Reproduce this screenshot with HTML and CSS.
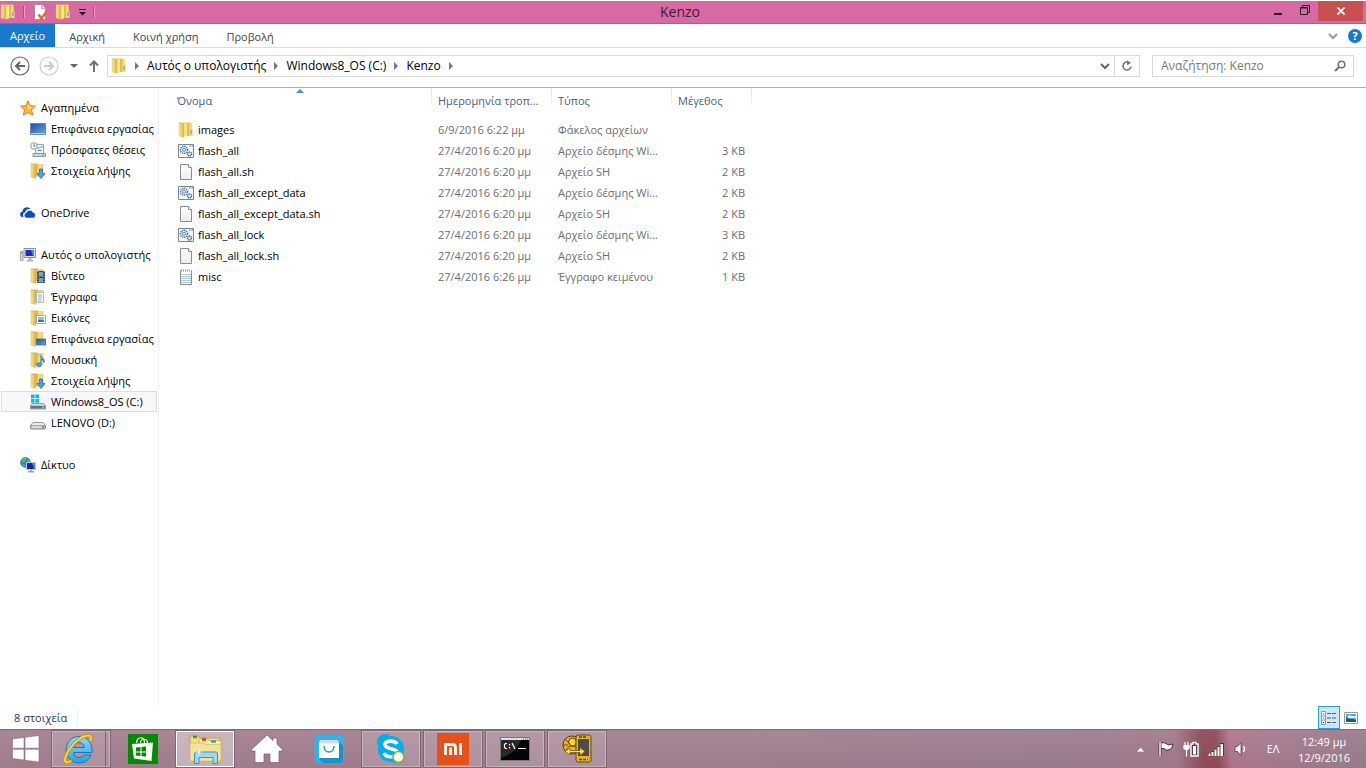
FILE: index.html
```html
<!DOCTYPE html>
<html lang="el">
<head>
    <meta charset="UTF-8">
    <title>Kenzo</title>
    <link rel="stylesheet" href="styles.css">
</head>
<body>
    <!-- shared icons -->
    <svg class="sprite" aria-hidden="true">
        <defs>
            <linearGradient id="gFolder" x1="0" x2="1" y1="0" y2="0">
                <stop offset="0" stop-color="#fbe99a"/>
                <stop offset="1" stop-color="#dcb23c"/>
            </linearGradient>
            <linearGradient id="gBlue" x1="0" x2="1" y1="0" y2="1">
                <stop offset="0" stop-color="#1d4fa0"/>
                <stop offset="1" stop-color="#6fa5e2"/>
            </linearGradient>
            <linearGradient id="gPage" x1="0" x2="0" y1="0" y2="1">
                <stop offset="0" stop-color="#fff"/>
                <stop offset="1" stop-color="#ececec"/>
            </linearGradient>
            <linearGradient id="gIe" x1="0" x2="0" y1="0" y2="1">
                <stop offset="0" stop-color="#8adcfb"/>
                <stop offset="1" stop-color="#2a9fe0"/>
            </linearGradient>
        </defs>
        <symbol id="folder" viewBox="0 0 16 16">
            <path d="M1 .5h11.500q1 0 1 1v5l1 1V14H1z" fill="#e9ca5e"/>
            <path d="M10.500 1h3v6l.8.800V14h-4z" fill="#f0d873"/>
            <path d="M1 .800 5.800 2v13.500L1 14z" fill="url(#gFolder)" stroke="#d9b84d" stroke-width=".4"/>
            <path d="M6.300 1.800 9.500 1v13l-3.200 1.500z" fill="#f8e690"/>
            <path d="M9.500 1l1 .5V14l-1 .3z" fill="#cfa636"/>
            <path d="M13 8v4" stroke="#4e9bd8"/>
        </symbol>
        <symbol id="lib" viewBox="0 0 16 16">
            <path d="M1 .5h7v13H3z" fill="#dcb850"/>
            <path d="M7.500 1.500H13V13H7z" fill="#f0d889" stroke="#d5b154" stroke-width=".5"/>
            <path d="M1 .8 5.500 2v13.500L1 14z" fill="url(#gFolder)" stroke="#d5b154" stroke-width=".5"/>
        </symbol>
        <symbol id="star" viewBox="0 0 16 16">
            <path d="m8 .8 2.200 4.900 5.300.5-4 3.600 1.200 5.300L8 12.400l-4.700 2.700 1.200-5.300-4-3.600 5.300-.5z" fill="#fdb948" stroke="#e8761f"/>
            <path d="m8 3 1.400 3.500 3.600.5L8 9z" fill="#ffe39a"/>
        </symbol>
        <symbol id="desktop" viewBox="0 0 16 16">
            <path d="M.5 2.500h15v11H.5z" fill="url(#gBlue)" stroke="#6f86a8"/>
            <path d="M1 12.500h14" stroke="#c5d3e4"/>
        </symbol>
        <symbol id="recent" viewBox="0 0 16 16">
            <path d="M5.500 2.500h8v9h-8z" fill="#eef2f5" stroke="#9aa5ae"/>
            <path d="M3 11.500h12.500v3H3z" fill="#cfd5da" stroke="#8f989f"/>
            <path d="M7.500 6h2M10.500 5h2M7.500 8.500h4" stroke="#3e86c5"/>
            <circle cx="4" cy="4" r="3.300" fill="#fafafa" stroke="#8d969d"/>
            <path d="M4 2v2.200h1.500" fill="none" stroke="#555" stroke-width=".8"/>
            <path d="M12 13h2" stroke="#5cbf59"/>
        </symbol>
        <symbol id="downloads" viewBox="0 0 16 16">
            <use href="#lib"/>
            <path d="M9.500 6h3v4.500H15l-4 5-4-5h2.500z" fill="#43a6ea" stroke="#1d6fb8" stroke-width=".8"/>
        </symbol>
        <symbol id="onedrive" viewBox="0 0 16 16">
            <path d="M1.500 12A3 3 0 0 1 2.500 6.500 4.500 4.500 0 0 1 10.500 4c-3-.5-5 1-5.200 3.300C3 8 2.500 10 3.500 12z" fill="#0e4db3"/>
            <path d="M6.500 13a2.700 2.700 0 0 1-.3-5.300 3.700 3.700 0 0 1 6.800-.5 3 3 0 0 1 .5 5.800z" fill="#0e4db3" stroke="#fff" stroke-width=".6"/>
        </symbol>
        <symbol id="computer" viewBox="0 0 16 16">
            <path d="M.5 4.500h2.500v9H.5z" fill="#d5d9de" stroke="#8a9097" stroke-width=".7"/>
            <path d="M4 1.500h11.500v9H4z" fill="#dfe4ec" stroke="#8a93a1"/>
            <path d="M5.500 3H14v6H5.500z" fill="#1a2fc0"/>
            <path d="M11 3h3v6h-1z" fill="#607bf0"/>
            <path d="M8.500 11h3v2h2v1.500H6.500V13h2z" fill="#b1b7bf"/>
            <path d="M1 6h1.500" stroke="#3fae49"/>
        </symbol>
        <symbol id="video" viewBox="0 0 16 16">
            <use href="#lib"/>
            <path d="M7 3h8v12H7z" fill="#39454f"/>
            <path d="M9 4h4v4.500H9zM9 10h4v4.500H9z" fill="#69a7d8"/>
            <path d="M8 3v12M14 3v12" stroke="#dfe5e9" stroke-dasharray="1 1.500" stroke-width=".9"/>
        </symbol>
        <symbol id="docs" viewBox="0 0 16 16">
            <use href="#lib"/>
            <path d="M6.500 3.500h7v10h-7z" fill="#fff" stroke="#a2adb8" stroke-width=".8"/>
            <path d="M8 6h4M8 8h4M8 10h4M8 12h3" stroke="#5f9bd2" stroke-width=".8"/>
        </symbol>
        <symbol id="pics" viewBox="0 0 16 16">
            <use href="#lib"/>
            <path d="M6.500 5.500h9v8h-9z" fill="#fff" stroke="#8e9ba7" stroke-width=".8"/>
            <path d="M8 7h6v5H8z" fill="#8fc4ea"/>
            <path d="M8 10.500c2-2 4 .5 6-.5v2H8z" fill="#2e8070"/>
        </symbol>
        <symbol id="libdesk" viewBox="0 0 16 16">
            <use href="#lib"/>
            <path d="M6.500 8h9v6h-9z" fill="url(#gBlue)" stroke="#41628f" stroke-width=".8"/>
        </symbol>
        <symbol id="music" viewBox="0 0 16 16">
            <use href="#lib"/>
            <path d="M10 2.500c.5 3 5 3.500 4 8 0-2-1.500-3-3-3.500V12" fill="#43a6ea" stroke="#1d74c1" stroke-width=".9"/>
            <ellipse cx="9" cy="12.800" rx="2.500" ry="2" fill="#43a6ea" stroke="#1d74c1" stroke-width=".7"/>
        </symbol>
        <symbol id="osdrive" viewBox="0 0 16 16">
            <path d="m2 9.500-1.500 2v3.500h15v-3.500l-2-2z" fill="#d4dade" stroke="#6e7a82" stroke-width=".7"/>
            <path d="M1 11.800h14v2.700H1z" fill="#63737c"/>
            <path d="M12 13.200h2" stroke="#5ff04a" stroke-width="1.500"/>
            <path d="M1 .5h3.600v3.700H1zM5.400.5H9v3.700H5.400zM1 5h3.600v3.700H1zM5.400 5H9v3.700H5.400z" fill="#10b5ee"/>
        </symbol>
        <symbol id="drive" viewBox="0 0 16 16">
            <path d="m3 7.500-2.500 3V13q0 1 1 1h13q1 0 1-1v-2.500l-2.500-3z" fill="#ececec" stroke="#7d7d7d" stroke-width=".8"/>
            <path d="M.8 10.500h14.400V13q0 .8-1 .8H1.800q-1 0-1-.8z" fill="#d9d9d9" stroke="#777" stroke-width=".6"/>
            <path d="M12 12.200h2" stroke="#2e9e2d" stroke-width="1.600"/>
        </symbol>
        <symbol id="network" viewBox="0 0 16 16">
            <circle cx="5.500" cy="5.500" r="5" fill="#2e83d0" stroke="#2865a5" stroke-width=".5"/>
            <path d="M2 2.500c2-1.500 3-1.500 4.500-1.500L5 4 2.500 5.500zM1.500 6.500 4.500 8 4 10zM7.500 2l2.500 1.500V6L8 5z" fill="#58c94b"/>
            <path d="M6.500 5.500h9v7h-9z" fill="#14279a" stroke="#c3cad8"/>
            <path d="M12 6h3v6h-1z" fill="#5d7ae8"/>
            <path d="M10 13h2v1h2v1.500H8V14h2z" fill="#9aa3ae"/>
        </symbol>
        <symbol id="batch" viewBox="0 0 16 16">
            <path d="M.5 1.500h15v13H.5z" fill="#f5f9fc" stroke="#7e858c"/>
            <path d="M11 3h4" stroke="#4c6ea0" stroke-dasharray="1 .5"/>
            <circle cx="6" cy="6.800" r="3.600" fill="#dceaf5" stroke="#3f6b96" stroke-width="1.400" stroke-dasharray="1.200 .9"/>
            <circle cx="6" cy="6.800" r="1.500" fill="#fff" stroke="#3f6b96" stroke-width=".8"/>
            <circle cx="11.500" cy="11" r="2" fill="#dceaf5" stroke="#2f5c8a" stroke-width="1.400" stroke-dasharray="1 .6"/>
        </symbol>
        <symbol id="page" viewBox="0 0 16 16">
            <path d="M2.500.5h8l3 3v12h-11z" fill="url(#gPage)" stroke="#8c8c8c"/>
            <path d="M10.500.5v3h3" fill="#fff" stroke="#8c8c8c"/>
        </symbol>
        <symbol id="text" viewBox="0 0 16 16">
            <path d="M2.500 1.500h11v14h-11z" fill="#fafcfd" stroke="#8c8c8c"/>
            <path d="M3 5.500h10M3 7.500h10M3 9.500h10M3 11.500h10M3 13.500h10" stroke="#b3c8d8"/>
            <path d="M3 1.500h10" stroke="#fff" stroke-width="2"/>
            <path d="M3 1.500h10" stroke="#999" stroke-width="2" stroke-dasharray="1 1"/>
        </symbol>
        <symbol id="chev" viewBox="0 0 10 10">
            <path d="m1 3 4 4 4-4" fill="none" stroke="currentColor" stroke-width="2"/>
        </symbol>
        <symbol id="next" viewBox="0 0 6 8">
            <path d="M1 0 5 4 1 8z" fill="#777"/>
        </symbol>
    </svg>

    <div class="window">
        <header class="titlebar">
            <div class="quick-access">
                <svg class="icon"><use href="#folder"/></svg>
                <span class="qa-line"></span>
                <button class="qa-button" aria-label="Ιδιότητες">
                    <svg class="icon" viewBox="0 0 16 16">
                        <path d="M2.500.5h7l4 4v11h-11z" fill="#fdfdfd" stroke="#a58c9c"/>
                        <path d="M9.500.5v4h4" fill="#e8e4e8" stroke="#b7a8b2"/>
                        <path d="m6.500 10.500 3 4 5-7" fill="none" stroke="#e5672c" stroke-width="2.400"/>
                    </svg>
                </button>
                <button class="qa-button" aria-label="Νέος φάκελος"><svg class="icon"><use href="#folder"/></svg></button>
                <button class="qa-menu" aria-label="Προσαρμογή">
                    <svg width="7" height="7" viewBox="0 0 7 7"><path d="M0 .5h7" stroke="#201018"/><path d="M0 3h7L3.500 6.500z" fill="#201018"/></svg>
                </button>
                <span class="qa-line"></span>
            </div>
            <h1>Kenzo</h1>
            <div class="window-buttons">
                <button class="win-button" aria-label="Ελαχιστοποίηση"><svg width="10" height="12" viewBox="0 0 10 12"><path d="M1 9h8" stroke="#222" stroke-width="2"/></svg></button>
                <button class="win-button" aria-label="Επαναφορά"><svg width="12" height="12" viewBox="0 0 12 12"><path d="M3.500 2.500v-2h7v7H9M1.500 2.500h7v7h-7zM1 3h8" fill="none" stroke="#222"/></svg></button>
                <button class="win-button close" aria-label="Κλείσιμο"><svg width="8" height="8" viewBox="0 0 8 8"><path d="m.5.5 7 7m0-7-7 7" stroke="#fff" stroke-width="1.600"/></svg></button>
            </div>
        </header>

        <nav class="ribbon">
            <button class="tab file">Αρχείο</button>
            <button class="tab">Αρχική</button>
            <button class="tab">Κοινή χρήση</button>
            <button class="tab">Προβολή</button>
            <div class="ribbon-end">
                <button class="plain" aria-label="Ανάπτυξη κορδέλας"><svg class="chev light"><use href="#chev"/></svg></button>
                <button class="help" aria-label="Βοήθεια">?</button>
            </div>
        </nav>

        <div class="address-row">
            <div class="nav-buttons">
                <button class="plain" aria-label="Πίσω">
                    <svg width="20" height="20" viewBox="0 0 20 20" fill="none" stroke="#666"><circle cx="10" cy="10" r="9" stroke-width="1.200"/><path d="M15 10H6m4-4-4 4 4 4" stroke-width="2"/></svg>
                </button>
                <button class="plain" aria-label="Εμπρός">
                    <svg width="20" height="20" viewBox="0 0 20 20" fill="none" stroke="#ccc"><circle cx="10" cy="10" r="9" stroke-width="1.200"/><path d="M5 10h9m-4-4 4 4-4 4" stroke-width="2"/></svg>
                </button>
                <button class="history" aria-label="Ιστορικό"><svg width="8" height="4" viewBox="0 0 8 4"><path d="M0 0h8L4 4z" fill="#666"/></svg></button>
                <button class="plain" aria-label="Επάνω">
                    <svg width="10" height="12" viewBox="0 0 10 12" fill="none" stroke="#707070" stroke-width="2"><path d="M5 12V2M1 5.500l4-4 4 4"/></svg>
                </button>
            </div>
            <div class="address-box">
                <svg class="icon"><use href="#folder"/></svg>
                <svg class="next"><use href="#next"/></svg>
                <a href="#">Αυτός ο υπολογιστής</a>
                <svg class="next"><use href="#next"/></svg>
                <a href="#">Windows8_OS (C:)</a>
                <svg class="next"><use href="#next"/></svg>
                <a href="#">Kenzo</a>
                <svg class="next"><use href="#next"/></svg>
                <button class="plain drop" aria-label="Προηγούμενες θέσεις"><svg class="chev"><use href="#chev"/></svg></button>
                <button class="refresh" aria-label="Ανανέωση">
                    <svg width="12" height="12" viewBox="0 0 12 12"><path d="M8.500 2.800A4 4 0 1 0 10 6.500" fill="none" stroke="#777" stroke-width="1.600"/><path d="M6 .2v5L10 3z" fill="#777"/></svg>
                </button>
            </div>
            <form class="search-box">
                <input type="text" placeholder="Αναζήτηση: Kenzo" aria-label="Αναζήτηση">
                <button class="plain" type="button" aria-label="Αναζήτηση">
                    <svg width="12" height="12" viewBox="0 0 12 12" fill="none" stroke="#707070"><circle cx="7.500" cy="4.500" r="3.300" stroke-width="1.500"/><path d="M5 7 1 11" stroke-width="2"/></svg>
                </button>
            </form>
        </div>

        <div class="content">
            <nav class="sidebar">
                <ul>
                    <li><a href="#"><svg class="icon"><use href="#star"/></svg>Αγαπημένα</a></li>
                    <li class="child"><a href="#"><svg class="icon"><use href="#desktop"/></svg>Επιφάνεια εργασίας</a></li>
                    <li class="child"><a href="#"><svg class="icon"><use href="#recent"/></svg>Πρόσφατες θέσεις</a></li>
                    <li class="child"><a href="#"><svg class="icon"><use href="#downloads"/></svg>Στοιχεία λήψης</a></li>
                </ul>
                <ul>
                    <li><a href="#"><svg class="icon"><use href="#onedrive"/></svg>OneDrive</a></li>
                </ul>
                <ul>
                    <li><a href="#"><svg class="icon"><use href="#computer"/></svg>Αυτός ο υπολογιστής</a></li>
                    <li class="child"><a href="#"><svg class="icon"><use href="#video"/></svg>Βίντεο</a></li>
                    <li class="child"><a href="#"><svg class="icon"><use href="#docs"/></svg>Έγγραφα</a></li>
                    <li class="child"><a href="#"><svg class="icon"><use href="#pics"/></svg>Εικόνες</a></li>
                    <li class="child"><a href="#"><svg class="icon"><use href="#libdesk"/></svg>Επιφάνεια εργασίας</a></li>
                    <li class="child"><a href="#"><svg class="icon"><use href="#music"/></svg>Μουσική</a></li>
                    <li class="child"><a href="#"><svg class="icon"><use href="#downloads"/></svg>Στοιχεία λήψης</a></li>
                    <li class="child selected"><a href="#"><svg class="icon"><use href="#osdrive"/></svg>Windows8_OS (C:)</a></li>
                    <li class="child"><a href="#"><svg class="icon"><use href="#drive"/></svg>LENOVO (D:)</a></li>
                </ul>
                <ul>
                    <li><a href="#"><svg class="icon"><use href="#network"/></svg>Δίκτυο</a></li>
                </ul>
            </nav>

            <main class="files">
                <table>
                    <colgroup>
                        <col class="col-name"><col class="col-date"><col class="col-type"><col class="col-size">
                    </colgroup>
                    <thead>
                        <tr>
                            <th class="name">Όνομα<svg class="sort" viewBox="0 0 8 4"><path d="M4 0 8 4H0z" fill="#4c8fb8"/></svg></th>
                            <th>Ημερομηνία τροπ...</th>
                            <th>Τύπος</th>
                            <th>Μέγεθος</th>
                        </tr>
                    </thead>
                    <tbody>
                        <tr><td class="name"><svg class="icon"><use href="#folder"/></svg>images</td><td>6/9/2016 6:22 μμ</td><td>Φάκελος αρχείων</td><td class="size"></td></tr>
                        <tr><td class="name"><svg class="icon"><use href="#batch"/></svg>flash_all</td><td>27/4/2016 6:20 μμ</td><td>Αρχείο δέσμης Wi...</td><td class="size">3 KB</td></tr>
                        <tr><td class="name"><svg class="icon"><use href="#page"/></svg>flash_all.sh</td><td>27/4/2016 6:20 μμ</td><td>Αρχείο SH</td><td class="size">2 KB</td></tr>
                        <tr><td class="name"><svg class="icon"><use href="#batch"/></svg>flash_all_except_data</td><td>27/4/2016 6:20 μμ</td><td>Αρχείο δέσμης Wi...</td><td class="size">2 KB</td></tr>
                        <tr><td class="name"><svg class="icon"><use href="#page"/></svg>flash_all_except_data.sh</td><td>27/4/2016 6:20 μμ</td><td>Αρχείο SH</td><td class="size">2 KB</td></tr>
                        <tr><td class="name"><svg class="icon"><use href="#batch"/></svg>flash_all_lock</td><td>27/4/2016 6:20 μμ</td><td>Αρχείο δέσμης Wi...</td><td class="size">3 KB</td></tr>
                        <tr><td class="name"><svg class="icon"><use href="#page"/></svg>flash_all_lock.sh</td><td>27/4/2016 6:20 μμ</td><td>Αρχείο SH</td><td class="size">2 KB</td></tr>
                        <tr><td class="name"><svg class="icon"><use href="#text"/></svg>misc</td><td>27/4/2016 6:26 μμ</td><td>Έγγραφο κειμένου</td><td class="size">1 KB</td></tr>
                    </tbody>
                </table>
            </main>
        </div>

        <footer class="statusbar">
            <span class="count">8 στοιχεία</span>
            <div class="views">
                <button class="view active" aria-label="Λεπτομέρειες">
                    <svg width="16" height="14" viewBox="0 0 16 14"><path d="M.5.5h4v13h-4zM.5 5h4M.5 9h4" fill="#fff" stroke="#8d9aa5"/><path d="M2 3h1M2 11.500h1" stroke="#333"/><path d="M2 7h1" stroke="#d22"/><path d="M6 2.500h4m1 0h4M6 7h4m1 0h4M6 11.500h4m1 0h4" stroke="#4f5f70"/></svg>
                </button>
                <button class="view" aria-label="Μεγάλα εικονίδια">
                    <svg width="14" height="12" viewBox="0 0 14 12"><path d="M.5.500h13v11H.5z" fill="#fff" stroke="#8d9aa5"/><path d="M2 2h10v8H2z" fill="#5ca4dd"/><path d="M4 4c2-2 3 1 8 0v2L4 6z" fill="#e4f3fc"/><path d="M2 5c3 3 5 1 10 3v2H2z" fill="#1f5d4d"/></svg>
                </button>
            </div>
        </footer>
    </div>

    <footer class="taskbar">
        <button class="start" aria-label="Έναρξη">
            <svg width="28" height="28" viewBox="0 0 28 28"><path d="M.5 4 12 2.500v10.700H.5zM13 2.300 27 .5v12.700H13zM.5 14.300H12V25L.5 23.500zM13 14.300h14V27l-14-1.800z" fill="#fff" stroke="#7d606f" stroke-width=".5"/></svg>
        </button>
        <div class="apps">
            <button class="app open stacked" aria-label="Internet Explorer">
                <svg width="32" height="32" viewBox="0 0 32 32">
                    <path d="M16 3.500C8.500 3.500 3 9.500 3 17s5.500 13 13 13c6 0 10-3 12-8h-7c-1 1.800-2.700 2.600-5 2.600-3.200 0-5.200-2-5.500-5.100H29C30 10 24 3.500 16 3.500zM10.600 14.500C11 11.500 13 9.500 16 9.500s5 2 5.300 5z" fill="url(#gIe)" stroke="#1b76b5" fill-rule="evenodd"/>
                    <path d="M27 8c2-3.500 1-6-2.500-5.500C16 3.500 5 15 2.300 25c-1.300 5 2.200 5.500 6 2.500" fill="none" stroke="#c98a13" stroke-width="3.400"/>
                    <path d="M27 8c2-3.500 1-6-2.500-5.500C16 3.500 5 15 2.300 25c-1.300 5 2.200 5.500 6 2.500" fill="none" stroke="#ffd23e" stroke-width="2"/>
                </svg>
            </button>
            <button class="app" aria-label="Store">
                <svg width="30" height="30" viewBox="0 0 30 30">
                    <path d="M0 0h30v30H0z" fill="#008a00"/>
                    <path d="M8.500 9c0-7 8-7 8 0M12.500 9c0-5 7-5 7 0" fill="none" stroke="#fff" stroke-width="1.200"/>
                    <path d="m4 10 21-1.500L23.500 27 6 24.500z" fill="#fff"/>
                    <path d="m8 13.500 4.500-.5v4.500H8zM13.500 13l4.500-.5v5h-4.500zM8 18.500h4.500V22L8 21.500zM13.500 18.500H18v4.200l-4.500-.6z" fill="#008a00"/>
                </svg>
            </button>
            <button class="app open current" aria-label="Εξερεύνηση αρχείων">
                <svg width="34" height="32" viewBox="0 0 34 32">
                    <path d="M2 3h9l1 2h20v22H2z" fill="#f3dc88" stroke="#c9a23d"/>
                    <path d="M11 5.500h8l1 2h13V27H11z" fill="#f8e9a8" stroke="#cfab48" stroke-width=".7"/>
                    <path d="M19 8h13v4H19z" fill="#fff0bc"/>
                    <path d="M5 4h4" stroke="#23a43b" stroke-width="2.500"/><path d="M14 6.500h4" stroke="#cf3a2e" stroke-width="2.500"/><path d="M23 8.500h5" stroke="#2d9be2" stroke-width="2.500"/>
                    <path d="M2 10h13l2 1.500h16V28H2z" fill="#f6e294" stroke="#d9b653" stroke-width=".6"/>
                    <path d="M6.500 30.500V21q0-2 2-2h19q2 0 2 2v9.500h-4.500v-6H11v6z" fill="#9bd9f3" stroke="#3b93bd"/>
                    <path d="m11 14 .6 4.400L16 19l-4.400.6L11 24l-.6-4.400L6 19l4.400-.6z" fill="#fff"/>
                </svg>
            </button>
            <button class="app" aria-label="Αρχική σελίδα">
                <svg width="32" height="30" viewBox="0 0 32 30"><path d="m16 1 6 5.500V4h4v6l5.500 5.500V17H28v11.500h-9V20h-6v8.500H4V17H.5v-1.500z" fill="#fff" stroke="#795c6b" stroke-width=".7"/></svg>
            </button>
            <button class="app" aria-label="Αγορές">
                <svg width="30" height="30" viewBox="0 0 30 30">
                    <rect width="29" height="29" x=".5" y=".5" rx="4" fill="#31b3e8"/>
                    <path d="m25 8 4 4v14q0 3-3 3H9l-4-5z" fill="#1992ca"/>
                    <path d="M5 9h20v15H5z" fill="#fff"/><path d="m6 6-1 3.500h20L24 6z" fill="#dadada"/>
                    <path d="M10 12c0 8 10 8 10 0" fill="none" stroke="#2199d5" stroke-width="1.500"/>
                </svg>
            </button>
            <button class="app open" aria-label="Skype">
                <svg width="32" height="32" viewBox="0 0 32 32">
                    <circle cx="10" cy="9" r="8" fill="#00aff0"/><circle cx="16" cy="16" r="13" fill="#00aff0"/><circle cx="21" cy="22" r="8" fill="#00aff0"/>
                    <path d="M22 11c-2-4-12-4-12 .8 0 5.200 12.500 2.600 12.500 8 0 5.200-11.500 5.200-13.500.2" fill="none" stroke="#fff" stroke-width="3.600"/>
                    <circle cx="23.500" cy="24" r="5.500" fill="#fff" stroke="#78b82a" stroke-width="1.500"/>
                </svg>
            </button>
            <button class="app open" aria-label="Mi">
                <svg width="32" height="32" viewBox="0 0 32 32"><path d="M0 0h32v32H0z" fill="#e4511a"/><path d="M8.500 22V11.500h7q3 0 3 3V22M13.500 14.500V22M23.500 10v12" fill="none" stroke="#fff" stroke-width="2.800"/></svg>
            </button>
            <button class="app open" aria-label="Γραμμή εντολών">
                <svg width="30" height="26" viewBox="0 0 30 26">
                    <path d="M.5 1.500h29v23H.5z" fill="#050505" stroke="#777"/><path d="M1 2h28v2H1z" fill="#d8e0ea"/><path d="M23 3h5" stroke="#4a6e9c" stroke-dasharray="1 1"/>
                    <path d="M1 22C10 19 17 14 21 4H1z" fill="#292929"/>
                    <path d="M7 7.500H5.500L4.500 8.500v3l1 1H7M9.500 8v1.500M9.500 11v1.500M12 7l3 6M18 12.500h8" fill="none" stroke="#fff" stroke-width="1.200"/>
                </svg>
            </button>
            <button class="app open" aria-label="Flash tool">
                <svg width="30" height="30" viewBox="0 0 30 30">
                    <circle cx="10" cy="11" r="9" fill="#e8b51e" stroke="#51400f"/><circle cx="10.500" cy="8" r="4" fill="#f7ce3c" stroke="#5d4a17"/><path d="M4 18c0-8 12-8 12 0M1 11h5M3 5l5 5" fill="none" stroke="#5d4a17"/>
                    <rect x="14" y="1" width="15" height="27" rx="2" fill="#e5b425" stroke="#5d4a17"/>
                    <path d="M16 5h11v17H16z" fill="#52494a"/><path d="M17 3h8M17 25.500h9" stroke="#554211" stroke-width="1.500" stroke-dasharray="3 1"/>
                    <path d="M7 14.500h1v2h10v-3l5 4-5 4v-3H8v2H7l-4-3z" fill="#ffdc48" stroke="#66501c" stroke-width=".7"/>
                </svg>
            </button>
        </div>

        <div class="tray">
            <button class="tray-icon" aria-label="Κρυφά εικονίδια"><svg width="9" height="5" viewBox="0 0 9 5"><path d="M4.500 0 9 5H0z" fill="#fff" stroke="#6c5362" stroke-width=".6"/></svg></button>
            <button class="tray-icon" aria-label="Κέντρο ενεργειών"><svg width="16" height="16" viewBox="0 0 16 16"><path d="M2 1v14" stroke="#4c3644" stroke-width="3"/><path d="M3 2c3-1 4 .5 6 1l1 1 5-1-1.500 4.500L10 9H7.500L6.500 7.500H3z" fill="#fff" stroke="#4c3644"/><path d="M2 1v14" stroke="#fff" stroke-width="1.400"/></svg></button>
            <button class="tray-icon" aria-label="Μπαταρία"><svg width="16" height="16" viewBox="0 0 16 16"><path d="M8 3h2V1.500h3V3h2v12H8z" fill="#55404c" stroke="#fff" stroke-width="1.400"/><path d="M10 5h3v8.500h-3z" fill="#fff"/><path d="M2 1v3M5 1v3M1 4.500h5v3l-1.500 1h-2L1 7.500zM3.500 8v7.500" fill="#fff" stroke="#fff" stroke-width="1.200"/></svg></button>
            <button class="tray-icon" aria-label="Δίκτυο"><svg width="16" height="16" viewBox="0 0 16 16"><path d="M0 12h3v3H0zM3 10h3v5H3zM6 7.500h3V15H6zM9 5h3v10H9zM12 2h4v13h-4z" fill="#4c3644"/><path d="M.5 12.500h2V15h-2zM3.500 11h2v4h-2zM6.500 8.500h2V15h-2zM9.500 6h2v9h-2zM12.500 3h2.500v12h-2.500z" fill="#fff"/></svg></button>
            <button class="tray-icon" aria-label="Ένταση ήχου"><svg width="16" height="16" viewBox="0 0 16 16"><path d="M2 5.500h2.500L8 1.500v13l-3.500-4H2z" fill="#fff" stroke="#4c3644" stroke-width=".8"/><path d="M10.500 5c1.300 2 1.300 4 0 6" fill="none" stroke="#fff" stroke-width="1.300"/></svg></button>
            <button class="lang">ΕΛ</button>
            <button class="clock"><span>12:49 μμ</span><span>12/9/2016</span></button>
        </div>
    </footer>
</body>
</html>
```
FILE: styles.css
```css
* {
    box-sizing: border-box;
}

body {
    margin: 0;
    height: 100vh;
    display: flex;
    flex-direction: column;
    font-family: "Open Sans", "Noto Sans", sans-serif;
    font-size: 11px;
    line-height: 16px;
    color: #000;
    background-color: #fff;
}

button, input {
    font: inherit;
    color: inherit;
}

button {
    display: flex;
    align-items: center;
    justify-content: center;
    padding: 0;
    border: none;
    background: none;
}

a {
    color: inherit;
    text-decoration: none;
}

.sprite {
    position: absolute;
    width: 0;
    height: 0;
}

.icon {
    flex: none;
    width: 16px;
    height: 16px;
}

.chev {
    width: 10px;
    height: 10px;
    color: #777;
}

.chev.light {
    color: #999;
}

.window {
    flex: 1;
    min-height: 0;
    display: flex;
    flex-direction: column;
    padding-top: 1px;
}

/* title bar */
.titlebar {
    display: grid;
    grid-template-columns: 1fr auto 1fr;
    height: 23px;
    padding-right: 3px;
    background-color: #d769a3;
    border-bottom: 1px solid #b5588a;
}

.titlebar h1 {
    margin: 0;
    padding-right: 3px;
    font-size: 14px;
    font-weight: normal;
    line-height: 22px;
    color: #3b1f2e;
}

.quick-access {
    display: flex;
    align-items: center;
    gap: 7px;
}

.qa-line {
    width: 2px;
    height: 12px;
    border-left: 1px solid #a85080;
    border-right: 1px solid #e9a3c8;
}

.qa-menu {
    width: 8px;
    height: 16px;
}

.window-buttons {
    display: flex;
    justify-content: flex-end;
    align-items: flex-start;
}

.win-button {
    width: 27px;
    height: 20px;
}

.win-button.close {
    width: 45px;
    background-color: #c75050;
}

/* ribbon tabs */
.ribbon {
    display: flex;
    height: 24px;
    border-bottom: 1px solid #dadbdc;
}

.tab {
    padding: 3px 14px 0;
    color: #444;
}

.tab.file {
    padding: 1px 10px 0;
    background-color: #1979ca;
    color: #fff;
}

.ribbon-end {
    display: flex;
    align-items: center;
    gap: 10px;
    margin-left: auto;
    padding-right: 4px;
}

.help {
    width: 14px;
    height: 14px;
    border-radius: 50%;
    background-color: #1979ca;
    color: #fff;
    font-weight: bold;
}

/* address row */
.address-row {
    display: flex;
    align-items: center;
    gap: 12px;
    height: 40px;
    padding: 0 12px 4px 10px;
    border-bottom: 1px solid #b0b0b0;
    font-size: 12px;
}

.nav-buttons {
    display: flex;
    align-items: center;
    gap: 9px;
    margin-right: -4px;
}

.history {
    width: 12px;
    height: 20px;
}

.address-box, .search-box {
    display: flex;
    align-items: center;
    height: 22px;
    border: 1px solid #d9d9d9;
}

.address-box {
    flex: 1;
    gap: 7px;
    padding-left: 3px;
}

.next {
    flex: none;
    width: 6px;
    height: 8px;
}

.drop {
    margin-left: auto;
}

.drop .chev {
    color: #666;
}

.refresh {
    align-self: stretch;
    width: 25px;
    margin-left: -3px;
    border-left: 1px solid #d9d9d9;
}

.search-box {
    width: 202px;
    padding: 0 7px 0 8px;
}

.search-box input {
    flex: 1;
    min-width: 0;
    padding: 0;
    border: none;
    outline: none;
    background: none;
}

.search-box input::placeholder {
    color: #777;
    opacity: 1;
}

/* folder tree and file list */
.content {
    flex: 1;
    min-height: 0;
    display: flex;
}

.sidebar {
    flex: none;
    width: 159px;
    padding-top: 9px;
    border-right: 1px solid #f0f0f0;
    white-space: nowrap;
}

.sidebar ul {
    margin: 0 0 21px;
    padding: 0 1px;
    list-style: none;
}

.sidebar a {
    display: flex;
    align-items: center;
    gap: 5px;
    height: 21px;
    padding-left: 19px;
}

.sidebar .child a {
    padding-left: 29px;
}

.sidebar .selected a {
    padding-left: 28px;
    background-color: #f7f7f7;
    border: 1px solid #dedede;
}

.files {
    flex: 1;
}

table {
    width: 593px;
    table-layout: fixed;
    border-collapse: collapse;
    white-space: nowrap;
}

.col-name {
    width: 273px;
}

.col-date, .col-type {
    width: 120px;
}

.col-size {
    width: 80px;
}

th {
    height: 31px;
    padding: 0 7px 5px 6px;
    text-align: left;
    font-weight: normal;
    color: #4c607a;
    background: linear-gradient(#d5e3ef, #fff) right top / 1px 22px no-repeat;
}

th.name {
    position: relative;
    padding-left: 18px;
}

.sort {
    position: absolute;
    top: 1px;
    left: 50%;
    width: 8px;
    height: 4px;
}

td {
    height: 21px;
    padding: 1px 7px 0 6px;
    color: #6d6d6d;
}

td.name {
    padding-left: 19px;
    color: #000;
}

td .icon {
    margin-right: 4px;
    vertical-align: top;
}

td.size {
    text-align: right;
}

/* status bar */
.statusbar {
    display: flex;
    align-items: center;
    height: 24px;
    padding: 1px 4px 0 0;
    color: #1e395b;
}

.count {
    padding: 0 10px 0 14px;
    border-right: 1px solid #eee;
}

.views {
    display: flex;
    margin-left: auto;
}

.view {
    width: 22px;
    height: 23px;
}

.view.active {
    background-color: #cce8f6;
    border: 1px solid #26a0da;
}

/* taskbar */
.taskbar {
    display: flex;
    height: 39px;
    border-top: 1px solid #846a78;
    color: #fff;
    background:
        linear-gradient(rgba(255, 255, 255, 0.05), rgba(0, 0, 0, 0.03)),
        linear-gradient(85deg, #a47f90 0%, #a28090 55%, #9c7e93 78%, #a37b8c 86%, #8f4b58 88%, #914d59 89%, #b07890 90%, #a27c8f 95%, #997e8e 100%);
}

.start {
    width: 51px;
}

.apps {
    display: flex;
    gap: 2px;
}

.app {
    width: 60px;
}

.app.open {
    background-color: rgba(255, 255, 255, 0.16);
    border: 1px solid #7e6573;
    box-shadow: inset 0 0 0 1px rgba(255, 255, 255, 0.3);
}

.app.stacked {
    padding-right: 5px;
    background: linear-gradient(#7e6573, #7e6573) right 4px top / 1px 100% no-repeat rgba(255, 255, 255, 0.16);
}

.app.current {
    background-color: rgba(255, 255, 255, 0.4);
    box-shadow: inset 0 0 0 1px #fff;
}

.tray {
    display: flex;
    align-items: center;
    margin-left: auto;
    padding-right: 11px;
}

.tray-icon {
    width: 25px;
    height: 38px;
}

.lang {
    width: 40px;
}

.clock {
    flex-direction: column;
    width: 62px;
    padding-top: 2px;
}
```
